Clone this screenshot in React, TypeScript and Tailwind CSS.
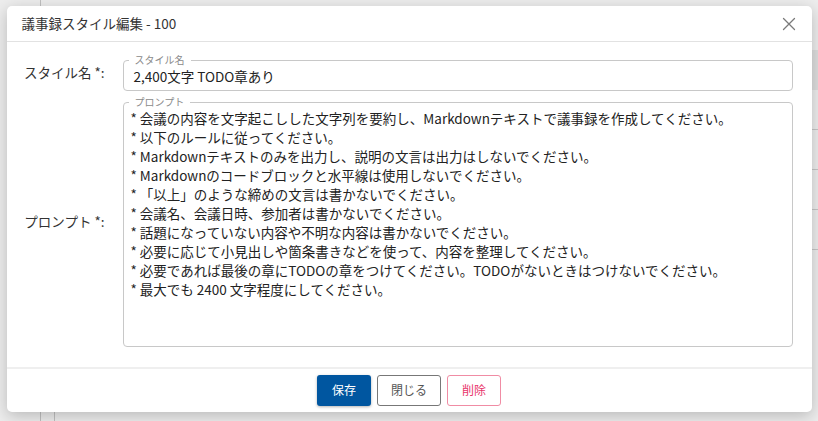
import React from 'react';

const FONT = { fontFamily: '"Noto Sans CJK JP", "Liberation Sans", sans-serif' };

const promptLines = [
  '* 会議の内容を文字起こしした文字列を要約し、Markdownテキストで議事録を作成してください。',
  '* 以下のルールに従ってください。',
  '* Markdownテキストのみを出力し、説明の文言は出力はしないでください。',
  '* Markdownのコードブロックと水平線は使用しないでください。',
  '* 「以上」のような締めの文言は書かないでください。',
  '* 会議名、会議日時、参加者は書かないでください。',
  '* 話題になっていない内容や不明な内容は書かないでください。',
  '* 必要に応じて小見出しや箇条書きなどを使って、内容を整理してください。',
  '* 必要であれば最後の章にTODOの章をつけてください。TODOがないときはつけないでください。',
  '* 最大でも 2400 文字程度にしてください。',
];

const CloseIcon: React.FC = () => (
  <svg width="14" height="14" viewBox="0 0 14 14" fill="none">
    <path d="M1.5 1.5L12.5 12.5M12.5 1.5L1.5 12.5" stroke="#7a7a7a" strokeWidth="1.3" strokeLinecap="round" />
  </svg>
);

interface FieldProps {
  legend: string;
  className?: string;
  children: React.ReactNode;
}

const OutlinedField: React.FC<FieldProps> = ({ legend, className = '', children }) => (
  <fieldset className={`min-w-0 rounded-[4px] border border-[#c8c8c8] ${className}`}>
    <legend className="ml-[5px] px-[6px] text-[10px] leading-[12px] text-[#8a8a8a]">{legend}</legend>
    {children}
  </fieldset>
);

const FormRow: React.FC<{ label: string; children: React.ReactNode }> = ({ label, children }) => (
  <div className="flex items-center">
    <div className="w-[98px] shrink-0 text-right text-[13.5px] text-[#333]">{label}</div>
    <div className="ml-[18px] flex-1 min-w-0">{children}</div>
  </div>
);

export default function App() {
  return (
    <div className="relative h-[421px] w-[818px] overflow-hidden bg-white" style={FONT}>
      {/* page underneath the modal */}
      <div className="flex h-full">
        <div className="w-[41px] shrink-0 border-r border-[#cfcfcf]" />
        <div className="flex flex-1 flex-col">
          <div className="h-[50px] flex justify-end pr-[2px] pt-[12px] text-[#666] text-[12px]">⋮</div>
          <div className="h-[40px] bg-[#efefef]" />
          <div className="h-[40px] border-b border-[#d6d6d6]" />
          <div className="h-[40px] border-b border-[#d6d6d6]" />
          <div className="h-[40px] border-b border-[#d6d6d6]" />
          <div className="h-[40px] border-b border-[#d6d6d6]" />
          <div className="flex-1" />
          <div className="h-[10px] ml-[13px] border-l border-[#cfcfcf]" />
        </div>
      </div>

      {/* modal */}
      <div className="absolute inset-0 flex justify-center bg-black/[0.07] pt-[6px]">
        <div className="flex h-[406px] w-[805px] flex-col rounded-[5px] bg-white shadow-[0_4px_16px_rgba(0,0,0,0.22)]">
          <div className="flex h-[36px] items-center justify-between border-b border-[#e2e2e2] pl-[15px] pr-[13px]">
            <span className="text-[13.5px] text-[#333]">議事録スタイル編集 - 100</span>
            <button className="flex h-[20px] w-[20px] items-center justify-center">
              <CloseIcon />
            </button>
          </div>

          <div className="flex flex-1 flex-col gap-[5px] pr-[19px] pt-[12px]">
            <FormRow label="スタイル名 *:">
              <OutlinedField legend="スタイル名" className="h-[37px]">
                <div className="pl-[10px] pt-[2px] text-[13.5px] leading-[17px] text-[#222]">2,400文字 TODO章あり</div>
              </OutlinedField>
            </FormRow>
            <FormRow label="プロンプト *:">
              <OutlinedField legend="プロンプト" className="h-[251px]">
                <div className="pl-[7px] pt-[1px] text-[13.5px] leading-[19px] text-[#222]">
                  {promptLines.map((line, i) => (
                    <div key={i}>{line}</div>
                  ))}
                </div>
              </OutlinedField>
            </FormRow>
          </div>

          <div className="flex h-[45px] items-center justify-center gap-[6px] border-t-2 border-[#efefef] pb-[1px]">
            <button className="h-[31px] w-[54px] rounded-[3px] bg-[#0056a0] text-[12px] text-white shadow-[0_1px_3px_rgba(0,0,0,0.3)]">
              保存
            </button>
            <button className="h-[31px] w-[64px] rounded-[3px] border border-[#777] bg-white text-[12px] text-[#555]">
              閉じる
            </button>
            <button className="h-[31px] w-[54px] rounded-[3px] border border-[#f08ca4] bg-white text-[12px] text-[#e8336a]">
              削除
            </button>
          </div>
        </div>
      </div>
    </div>
  );
}
